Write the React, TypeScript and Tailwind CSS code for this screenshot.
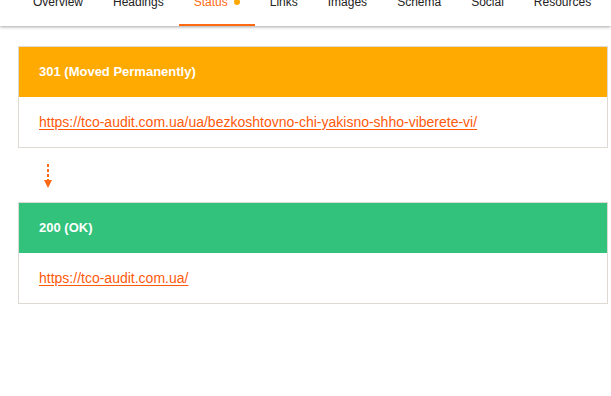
const tabs = ['Overview', 'Headings', 'Status', 'Links', 'Images', 'Schema', 'Social', 'Resources']

interface Hop {
  code: string
  url: string
  color: string
}

const hops: Hop[] = [
  {
    code: '301 (Moved Permanently)',
    url: 'https://tco-audit.com.ua/ua/bezkoshtovno-chi-yakisno-shho-viberete-vi/',
    color: 'bg-[#ffaa00]',
  },
  { code: '200 (OK)', url: 'https://tco-audit.com.ua/', color: 'bg-[#33c27c]' },
]

function HopCard({ hop }: { hop: Hop }) {
  return (
    <div className="border border-[#dedad3] bg-white">
      <div className={`h-[50px] flex items-center px-[20px] text-[13px] font-bold text-white ${hop.color}`}>
        {hop.code}
      </div>
      <div className="h-[50px] flex items-center px-[20px] text-[14px]">
        <a href="#" className="text-[#ff5a0a] underline underline-offset-[2px]">
          {hop.url}
        </a>
      </div>
    </div>
  )
}

function DownArrow() {
  return (
    <div className="h-[54px] flex items-center pl-[25px]">
      <svg width="10" height="26" viewBox="0 0 10 26" className="mt-[4px]">
        <line x1="5" y1="0" x2="5" y2="17" stroke="#ff6a13" strokeWidth="2" strokeDasharray="3 2" />
        <polygon points="1,16 9,16 5,24" fill="#ff6a13" />
      </svg>
    </div>
  )
}

export default function App() {
  return (
    <div className="min-h-[396px] bg-white font-['Liberation_Sans',Arial,sans-serif] text-[#222]">
      <nav className="h-[26px] flex items-end pl-[18px] bg-white shadow-[0_1px_3px_rgba(0,0,0,0.35)] relative">
        {tabs.map((tab) => {
          const active = tab === 'Status'
          return (
            <div
              key={tab}
              className={`flex items-center px-[15px] pb-[15px] text-[12px] leading-[14px] border-b-2 ${
                active ? 'border-[#ff6a13] text-[#ff6a13]' : 'border-transparent'
              }`}
            >
              {tab}
              {active && <span className="ml-[6px] w-[6px] h-[6px] rounded-full bg-[#ffa800]" />}
            </div>
          )
        })}
      </nav>

      <div className="pt-[20px] pl-[18px] pr-[3px]">
        <HopCard hop={hops[0]} />
        <DownArrow />
        <HopCard hop={hops[1]} />
      </div>
    </div>
  )
}
